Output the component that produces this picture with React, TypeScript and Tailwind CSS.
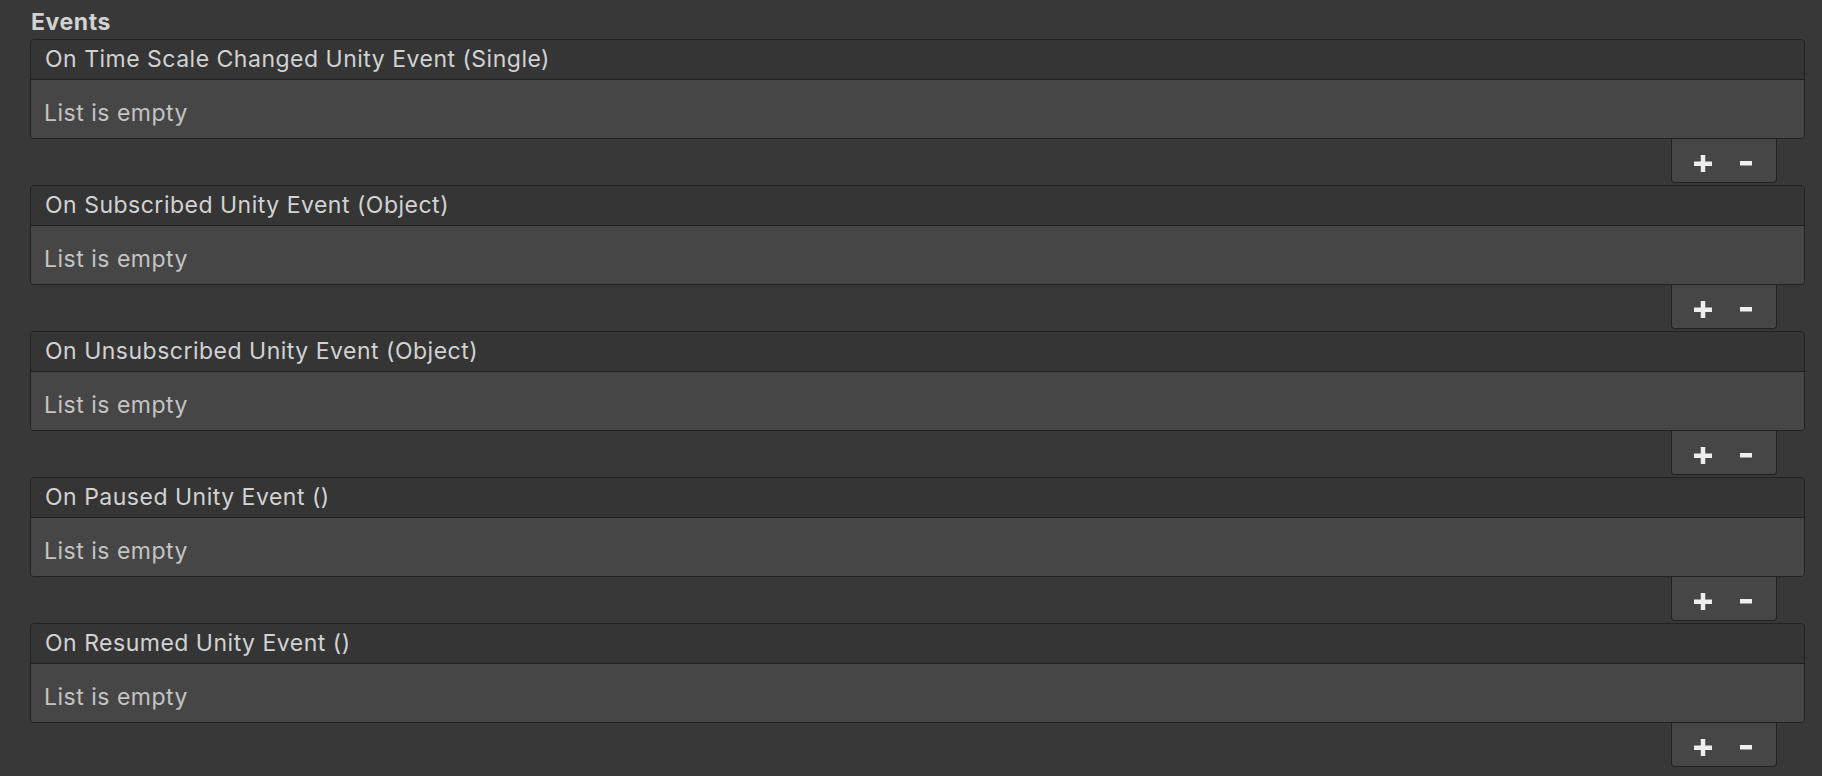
const events = [
  'On Time Scale Changed Unity Event (Single)',
  'On Subscribed Unity Event (Object)',
  'On Unsubscribed Unity Event (Object)',
  'On Paused Unity Event ()',
  'On Resumed Unity Event ()',
]

function PlusIcon() {
  return (
    <svg width="18" height="18" viewBox="0 0 18 18">
      <rect x="0" y="6.5" width="18" height="4.5" fill="#eeeeee" />
      <rect x="6.75" y="0" width="4.5" height="17" fill="#eeeeee" />
    </svg>
  )
}

function MinusIcon() {
  return (
    <svg width="12" height="18" viewBox="0 0 12 18">
      <rect x="0" y="6" width="12" height="4.5" fill="#eeeeee" />
    </svg>
  )
}

function EventList({ title }: { title: string }) {
  return (
    <div className="flex flex-col mb-[2px]">
      {/* List box */}
      <div className="border border-[#212121] rounded-[4px] overflow-hidden">
        <div className="h-[40px] bg-[#353535] border-b border-[#212121] flex items-center pl-[14px] text-[23px] leading-none tracking-[0.5px] text-[#d2d2d2]">
          {title}
        </div>
        <div className="h-[58px] bg-[#464646] flex items-center pl-[13px] pt-[9px] text-[23px] leading-none tracking-[0.5px] text-[#c4c4c4]">
          List is empty
        </div>
      </div>

      {/* Footer buttons */}
      <div className="flex justify-end pr-[28px]">
        <div className="w-[106px] h-[44px] bg-[#464646] border-x border-b border-[#212121] rounded-b-[4px] flex items-center pt-[7px]">
          <div className="w-[62px] flex justify-center">
            <PlusIcon />
          </div>
          <div className="w-[24px] flex justify-center">
            <MinusIcon />
          </div>
        </div>
      </div>
    </div>
  )
}

export default function App() {
  return (
    <div
      className="w-[1822px] h-[776px] bg-[#383838] pl-[30px] pr-[17px] overflow-hidden"
      style={{ fontFamily: 'Inter, "Noto Sans", sans-serif' }}
    >
      <div className="h-[39px] flex items-end pb-[5px] pl-[1px] text-[23px] leading-none tracking-[0.6px] font-bold text-[#d2d2d2]">
        Events
      </div>
      {events.map((e) => (
        <EventList key={e} title={e} />
      ))}
    </div>
  )
}
